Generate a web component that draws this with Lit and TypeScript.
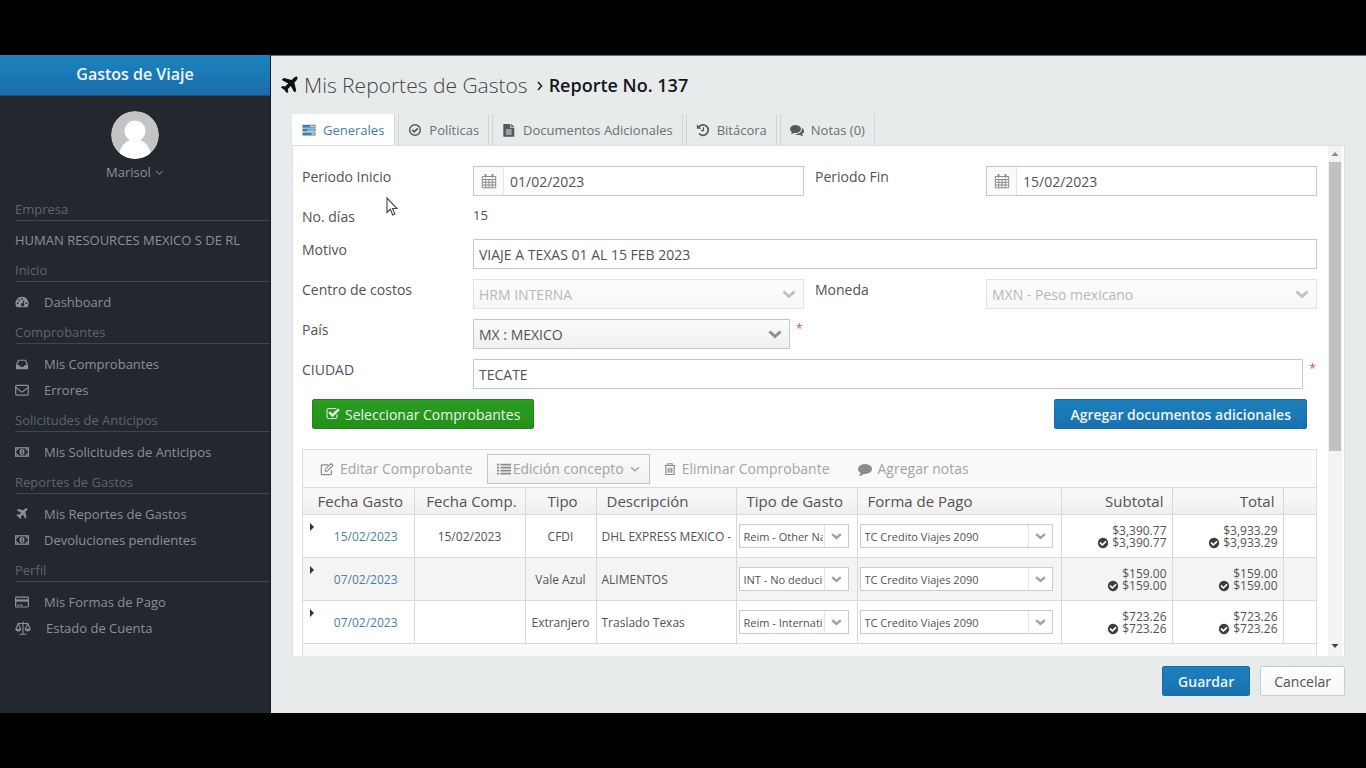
import { LitElement, html, css, svg, nothing } from "lit";
import { customElement, state } from "lit/decorators.js";

const fa = (d: string) => svg`<svg class="ico" viewBox="0 0 1792 1792" aria-hidden="true"><path fill="currentColor" d=${d}/></svg>`;

const plane = fa("M1568 160q44 52 12 148t-108 172l-161 161 160 696q5 19-12 33l-128 96q-7 6-19 6-4 0-7-1-15-3-21-16l-279-508-259 259 53 194q5 17-8 31l-96 96q-9 9-23 9h-2q-15-2-24-13l-189-252-252-189q-11-7-13-23-1-13 9-25l96-97q9-9 23-9 6 0 8 1l194 53 259-259-508-279q-14-8-17-24-2-16 9-27l128-128q14-13 30-8l665 159 160-160q76-76 172-108t148 12z");
const checkSquare = fa("M1472 930v318q0 119-84.5 203.5t-203.5 84.5h-832q-119 0-203.5-84.5t-84.5-203.5v-832q0-119 84.5-203.5t203.5-84.5h832q63 0 117 25 15 7 18 23 3 17-9 29l-49 49q-10 10-23 10-3 0-9-2-23-6-45-6h-832q-66 0-113 47t-47 113v832q0 66 47 113t113 47h832q66 0 113-47t47-113v-254q0-13 9-22l64-64q10-10 23-10 6 0 12 3 20 8 20 29zm231-489l-814 814q-24 24-57 24t-57-24l-430-430q-24-24-24-57t24-57l110-110q24-24 57-24t57 24l263 263 647-647q24-24 57-24t57 24l110 110q24 24 24 57t-24 57z");
const checkCircle = fa("M1412 734q0-28-18-46l-91-90q-19-19-45-19t-45 19l-408 407-226-226q-19-19-45-19t-45 19l-91 90q-18 18-18 46 0 27 18 45l362 362q19 19 45 19 27 0 46-19l543-543q18-18 18-45zm252 162q0 209-103 385.5t-279.5 279.5-385.5 103-385.5-103-279.5-279.5-103-385.5 103-385.5 279.5-279.5 385.5-103 385.5 103 279.5 279.5 103 385.5z");
const comment = fa("M1792 896q0 174-120 321.5t-326 233-450 85.500q-70 0-145-8-198 175-460 242-49 14-114 22-17 2-30.500-9t-17.500-29v-1q-3-4-.5-12t2-10 4.500-9.500l6-9 7-8.500 8-9q7-8 31-34.500t34.500-38 31-39.500 32.500-51 27-59 26-76q-157-89-247.500-220t-90.500-281q0-174 120-321.500t326-233 450-85.500 450 85.500 326 233 120 321.500z");
const comments = fa("M1408 768q0 139-94 257t-256.500 186.500-353.500 68.500q-86 0-176-16-124 88-278 128-36 9-86 16h-3q-11 0-20.500-8t-11.500-21q-1-3-1-6.500t.5-6.500 2-6l2.500-5 3.500-5.500 4-5 4.500-5 4-4.500q5-6 23-25t26-29.500 22.500-29 25-38.500 20.500-44q-124-72-195-177t-71-224q0-139 94-257t256.500-186.500 353.500-68.500 353.500 68.500 256.500 186.500 94 257zm384 256q0 120-71 224.500t-195 176.500q10 24 20.500 44t25 38.500 22.500 29 26 29.500 23 25q1 1 4 4.500t4.500 5 4 5 3.500 5.500l2.500 5 2 6 .5 6.500-1 6.500q-3 14-13 22t-22 7q-50-7-86-16-154-40-278-128-90 16-176 16-271 0-472-132 58 4 88 4 161 0 309-45t264-129q125-92 192-212t67-254q0-77-23-152 129 71 204 178t75 230z");

const box = (body: unknown) => svg`<svg class="ico" viewBox="0 0 16 16" fill="none" stroke="currentColor" stroke-width="1.4" aria-hidden="true">${body}</svg>`;

const gauge = box(svg`<path fill="currentColor" stroke="none" fill-rule="evenodd" d="M8 2a7.5 7.5 0 0 0-6.3 11.6q.3.4.7.4h11.2q.4 0 .7-.4A7.5 7.5 0 0 0 8 2zM2.2 9.300a1 1 0 1 0 2 0 1 1 0 1 0-2 0zM3.800 5.800a1 1 0 1 0 2 0 1 1 0 1 0-2 0zM7 4.300a1 1 0 1 0 2 0 1 1 0 1 0-2 0zM11.800 9.300a1 1 0 1 0 2 0 1 1 0 1 0-2 0zM9.800 5.600l.9.3-.9 3.600a1.900 1.900 0 1 1-1-.3z"/>`);
const inbox = box(svg`<path d="M1.700 9.500 4 3.700h8l2.300 5.800v3.800H1.700z" stroke-linejoin="round"/><path fill="currentColor" stroke="none" d="M1.500 9h3.400l1 2h4.200l1-2h3.400v4.600h-13z"/>`);
const envelope = box(svg`<rect x=".8" y="2.8" width="14.4" height="11" rx="1"/><path d="m1 5 5.800 4.600q1.200.9 2.400 0L15 5"/>`);
const money = box(svg`<rect x=".7" y="3.200" width="14.600" height="9.600"/><path d="M1 6q2.300-.3 2.500-2.500M15 6q-2.300-.3-2.500-2.500M1 10q2.300.3 2.500 2.500M15 10q-2.300.3-2.500 2.500"/><ellipse cx="8" cy="8" rx="2.800" ry="3.400" fill="currentColor" stroke="none"/><path stroke="#23272e" stroke-width=".9" d="M7.200 6.700 8.200 6.200v3.300M7 9.600h2.300"/>`);
const card = box(svg`<rect x=".7" y="2.300" width="14.600" height="11.400" rx="1"/><path stroke-width="2.600" d="M1 6.300h14"/><path d="M2.500 11.500h2M5.500 11.500h3"/>`);
const scale = svg`<svg class="ico broad" viewBox="0 0 16 16" fill="none" stroke="currentColor" aria-hidden="true"><path stroke-width="1.100" d="M8 1.500v12.500M4.500 14.300h7M2.500 3.500h11M3.200 3.500.8 9.300h5L3.200 3.500zM12.800 3.500l-2.600 5.800h5z"/><path fill="currentColor" stroke="none" d="M.4 9.300h5.800q-.4 2.200-2.900 2.200T.4 9.300zM9.800 9.300h5.800q-.4 2.200-2.900 2.200T9.800 9.300z"/></svg>`;
const tasks = box(svg`<path fill="currentColor" stroke="none" fill-rule="evenodd" d="M.5 2h15v3.400H.5zM9 3.200v1h5.500v-1zM.5 6.400h15v3.400H.5zM6 7.600v1h8.500v-1zM.5 10.800h15v3.400H.5zM11 12v1h3.500v-1z"/>`);
const checkCircleO = box(svg`<circle cx="8" cy="8" r="6.100" stroke-width="1.700"/><path stroke-width="2" d="m5 7.800 2.200 2.200 3.900-3.900"/>`);
const fileText = box(svg`<path fill="currentColor" stroke="none" fill-rule="evenodd" d="M1.500 1h8v4.500H14V15q0 .8-.8.8H2.300q-.8 0-.8-.8zM4.500 7.500v1H11v-1zM4.500 9.800v1H11v-1zM4.500 12.100v1H11v-1z"/><path fill="currentColor" stroke="none" d="M10.500.8 14 4.500h-3.500z"/>`);
const history = box(svg`<path stroke-width="2" d="M3.300 4.300A6 6 0 1 1 3.400 12"/><path fill="currentColor" stroke="none" d="M1 1.500v5.200h5.200z"/><path stroke-width="1.400" d="M8.500 4.800v4H5.800"/>`);
const calendar = box(svg`<path stroke-width="1" d="M1.300 3.500h13.400v11.300H1.300zM1.300 6.500h13.400M1.300 9.300h13.400M1.300 12h13.400M4.700 6.500v8.300M8 6.500v8.300M11.300 6.500v8.300"/><path stroke-width="1.800" d="M4.500 1v3.500M11.500 1v3.500"/>`);
const edit = box(svg`<path d="M13 9.500v3.800q0 1-1 1H2.500q-1 0-1-1V4.200q0-1 1-1h7"/><path stroke-width="1.200" d="M6 8.300 12.600 1.700l2.200 2.200-6.600 6.600H6z"/>`);
const list = box(svg`<path stroke-width="2" d="M0 3h2.500M4 3h12M0 6.400h2.500M4 6.400h12M0 9.800h2.500M4 9.800h12M0 13.200h2.500M4 13.200h12"/>`);
const trash = svg`<svg class="ico thin" viewBox="2 0 12 16" fill="none" stroke="currentColor" aria-hidden="true"><path d="M2 4h12M5.500 4V2h5v2M3.300 4v10.300h9.400V4M6 6.500v5.800M8 6.500v5.800M10 6.500v5.800" stroke-width="1.300"/></svg>`;
const chevron = svg`<svg class="chev" viewBox="0 0 14 14" fill="none" stroke="currentColor" aria-hidden="true"><path d="m1.500 4.500 5.500 5 5.500-5"/></svg>`;

const menu = [
  { title: "Inicio", items: [{ icon: gauge, text: "Dashboard" }] },
  { title: "Comprobantes", items: [{ icon: inbox, text: "Mis Comprobantes" }, { icon: envelope, text: "Errores" }] },
  { title: "Solicitudes de Anticipos", items: [{ icon: money, text: "Mis Solicitudes de Anticipos" }] },
  { title: "Reportes de Gastos", items: [{ icon: plane, text: "Mis Reportes de Gastos" }, { icon: money, text: "Devoluciones pendientes" }] },
  { title: "Perfil", items: [{ icon: card, text: "Mis Formas de Pago" }, { icon: scale, text: "Estado de Cuenta" }] },
];

const tabs = [
  { icon: tasks, text: "Generales" },
  { icon: checkCircleO, text: "Políticas" },
  { icon: fileText, text: "Documentos Adicionales" },
  { icon: history, text: "Bitácora" },
  { icon: comments, text: "Notas (0)" },
];

const rows = [
  { date: "15/02/2023", comp: "15/02/2023", type: "CFDI", desc: "DHL EXPRESS MEXICO -", kind: "Reim - Other National", pay: "TC Credito Viajes 2090", sub: "$3,390.77", total: "$3,933.29" },
  { date: "07/02/2023", comp: "", type: "Vale Azul", desc: "ALIMENTOS", kind: "INT - No deducible", pay: "TC Credito Viajes 2090", sub: "$159.00", total: "$159.00" },
  { date: "07/02/2023", comp: "", type: "Extranjero", desc: "Traslado Texas", kind: "Reim - International", pay: "TC Credito Viajes 2090", sub: "$723.26", total: "$723.26" },
];

const shared = css`
  :host, *, *::before, *::after { box-sizing: border-box; }
  button, input, select { font: inherit; color: inherit; margin: 0; border-radius: 0; }
  button { cursor: pointer; }
  .ico { width: 14px; height: 14px; flex: none; display: block; }
  .chev { width: 14px; height: 14px; flex: none; display: block; stroke-width: 2; }
`;

@customElement("side-menu")
class SideMenu extends LitElement {
  static styles = [shared, css`
    :host { display: flex; flex-direction: column; width: 271px; flex: none; background: #23272e; color: #8b9096; border-right: 1px solid #14171b; overflow: hidden; font-size: 13px; }
    .brand { height: 41px; flex: none; display: flex; align-items: center; justify-content: center; padding-bottom: 2px; font-size: 16px; font-weight: 600; color: #f1f8fc; background: linear-gradient(#1b85bd, #1a6cab); border-bottom: 1px solid #1c4f78; }
    .user { display: flex; flex-direction: column; align-items: center; padding: 15px 0; gap: 3px; }
    .avatar { width: 48px; height: 48px; border-radius: 50%; display: block; }
    .who { display: flex; align-items: center; gap: 4px; height: 20px; border: 0; padding: 0; background: none; }
    .who .chev { width: 9px; height: 9px; opacity: .7; }
    section { padding-bottom: 5px; }
    h2 { margin: 0 0 7px 15px; height: 24px; line-height: 24px; font-size: 13px; font-weight: 400; color: #5f656d; border-bottom: 1px solid #41464d; }
    .company { margin: 0 0 0 15px; line-height: 25px; white-space: nowrap; }
    ul { margin: 0; padding: 0; list-style: none; }
    a { display: flex; align-items: center; gap: 15px; height: 26px; padding-left: 15px; color: inherit; text-decoration: none; white-space: nowrap; }
    .broad { width: 16px; height: 16px; }
  `];

  render() {
    return html`
      <div class="brand">Gastos de Viaje</div>
      <div class="user">
        <svg class="avatar" viewBox="0 0 48 48" aria-hidden="true"><clipPath id="round"><circle cx="24" cy="24" r="24"/></clipPath><g clip-path="url(#round)"><path fill="#c4c4c4" d="M0 0h48v48H0z"/><circle cx="24" cy="20" r="10.500" fill="#fff"/><path fill="#fff" d="M8 44q2-12 11-15 5 3 10 0 9 3 11 15-7 6-16 6T8 44z"/></g></svg>
        <button class="who">Marisol ${chevron}</button>
      </div>
      <section><h2>Empresa</h2><p class="company">HUMAN RESOURCES MEXICO S DE RL</p></section>
      <nav>
        ${menu.map(s => html`<section><h2>${s.title}</h2><ul>${s.items.map(i => html`<li><a href="#">${i.icon}<span>${i.text}</span></a></li>`)}</ul></section>`)}
      </nav>`;
  }
}

@customElement("expense-table")
class ExpenseTable extends LitElement {
  static styles = [shared, css`
    :host { display: block; border: 1px solid #dcdedf; background: #fafafa; color: #525354; }
    .tools { display: flex; align-items: center; height: 37px; padding-left: 3px; color: #a3a3a3; font-size: 14px; }
    .tools button { display: flex; align-items: center; gap: 6px; height: 30px; padding: 0 13px; border: 1px solid transparent; background: none; white-space: nowrap; }
    .tools .drop { gap: 2px; padding: 0 9px; border-color: #c3c5c6; background: linear-gradient(#fafafa, #f1f1f1); }
    .tools .drop .chev { width: 10px; height: 10px; margin-left: 4px; }
    .tools .ico { color: #8b8b8b; }
    .tools .thin { width: 12px; }
    table { width: 100%; table-layout: fixed; border-collapse: collapse; }
    th, td { padding: 0 5px; border-right: 1px solid #d6d8d9; border-bottom: 1px solid #d9dbdc; font-weight: 400; text-align: left; white-space: nowrap; overflow: hidden; }
    th:last-child, td:last-child { border-right: 0; }
    th { height: 27px; padding: 0 10px; font-size: 15px; border-top: 1px solid #d9dbdc; background: linear-gradient(#fafafa, #efefef); }
    td { height: 43px; font-size: 12px; background: #fff; }
    tr:nth-child(even) td { background: #f4f4f4; }
    .mid { text-align: center; padding: 0 3px; }
    th.mid { padding: 0 1px 0 5px; }
    .num { text-align: right; }
    th.num { padding-right: 8px; }
    .c-date { width: 111px; } .c-comp { width: 111px; } .c-type { width: 71px; } .c-desc { width: 140px; }
    .c-kind { width: 121px; } .c-num { width: 111px; } .c-end { width: 33px; }
    .date { display: flex; justify-content: space-between; align-items: flex-start; padding: 0 11px 0 1px; }
    .open { width: 8px; height: 8px; padding: 0; border: 0; background: none; }
    .open svg { display: block; width: 6px; height: 8px; }
    .date a { color: #4b7f9f; text-decoration: none; padding: 5px 0; }
    .pick { display: grid; }
    .pick > * { grid-area: 1 / 1; }
    td.combo { padding: 0 8px 0 2px; }
    .pick select { appearance: none; width: 100%; height: 24px; padding: 0 25px 0 4px; border: 1px solid #c9cbcc; background: #fff; font-size: 11px; text-overflow: clip; }
    .pick .chev { width: 24px; height: 22px; padding: 4px 6px; margin-right: 1px; justify-self: end; align-self: center; border-left: 1px solid #e4e6e7; color: #a0a0a0; stroke-width: 3; pointer-events: none; }
    .sum { display: flex; flex-direction: column; align-items: flex-end; padding-top: 2px; line-height: 12px; }
    .sum span { display: flex; align-items: center; gap: 3px; }
    .sum .ico { width: 12px; height: 12px; color: #3c3c3c; }
    .rest { height: 60px; }
  `];

  private amount(v: string) {
    return html`<div class="sum"><span>${v}</span><span>${checkCircle}${v}</span></div>`;
  }

  private combo(label: string, v: string) {
    return html`<div class="pick"><select aria-label=${label}><option>${v}</option></select>${chevron}</div>`;
  }

  render() {
    return html`
      <div class="tools">
        <button>${edit}Editar Comprobante</button>
        <button class="drop">${list}Edición concepto${chevron}</button>
        <button>${trash}Eliminar Comprobante</button>
        <button>${comment}Agregar notas</button>
      </div>
      <table>
        <colgroup><col class="c-date"><col class="c-comp"><col class="c-type"><col class="c-desc"><col class="c-kind"><col><col class="c-num"><col class="c-num"><col class="c-end"></colgroup>
        <thead><tr><th class="mid">Fecha Gasto</th><th class="mid">Fecha Comp.</th><th class="mid">Tipo</th><th>Descripción</th><th>Tipo de Gasto</th><th>Forma de Pago</th><th class="num">Subtotal</th><th class="num">Total</th><th></th></tr></thead>
        <tbody>
          ${rows.map(r => html`<tr>
            <td><div class="date"><button class="open" aria-label="Expandir"><svg viewBox="0 0 6 8"><path fill="#333" d="M1 0l4 4-4 4z"/></svg></button><a href="#">${r.date}</a></div></td>
            <td class="mid">${r.comp}</td>
            <td class="mid">${r.type}</td>
            <td>${r.desc}</td>
            <td class="combo">${this.combo("Tipo de Gasto", r.kind)}</td>
            <td class="combo">${this.combo("Forma de Pago", r.pay)}</td>
            <td class="num">${this.amount(r.sub)}</td>
            <td class="num">${this.amount(r.total)}</td>
            <td></td>
          </tr>`)}
        </tbody>
      </table>
      <div class="rest"></div>`;
  }
}

@customElement("app-root")
class AppRoot extends LitElement {
  @state() private tab = 0;

  static styles = [shared, css`
    :host { display: flex; position: relative; height: 100vh; padding: 55px 0; background: #000; color: #525354; font-family: "Open Sans", "Noto Sans", sans-serif; font-size: 14px; }
    main { flex: 1; min-width: 0; display: flex; flex-direction: column; background: #e7ebec; border-top: 1px solid #3d7db3; }
    h1 { display: flex; align-items: center; height: 58px; flex: none; margin: 0; padding-left: 8px; font-size: 21px; font-weight: 300; color: #444; white-space: nowrap; }
    h1 .ico { width: 21px; height: 21px; color: #111; margin-right: 4px; }
    h1 .sep { width: 8px; height: 10px; margin: 2px 5px 0 8px; }
    h1 b { font-size: 18px; font-weight: 600; color: #161616; }
    .tabs { display: flex; gap: 3px; padding-left: 21px; flex: none; }
    .tabs button { display: flex; align-items: center; gap: 7px; height: 31px; padding: 0 9px; border: 1px solid #d2d6d7; border-width: 0 1px; background: none; color: #6b6f72; font-size: 13px; white-space: nowrap; }
    .tabs button.on { padding-right: 10px; background: #fff; color: #3e7ea8; border-left-color: #fff; }
    .tabs button:not(.on) .ico { color: #55595c; }
    .panel { flex: 1; min-height: 0; display: flex; margin: 0 21px; background: #fff; border: 1px solid #dde0e1; border-bottom: 0; }
    .body { flex: 1; min-width: 0; overflow: hidden; padding: 20px 11px 0 9px; }
    .bar { width: 14px; flex: none; display: flex; flex-direction: column; align-items: center; background: #f3f3f3; margin-right: 2px; }
    .bar i { width: 12px; height: 289px; background: #c1c1c1; }
    .bar svg { width: 14px; height: 16px; flex: none; display: block; }
    .bar svg:last-child { margin-top: auto; }
    .form { display: grid; grid-template-columns: 160px minmax(0, 1fr) 160px minmax(0, 1fr); gap: 10px 11px; }
    .form label, .cap { line-height: 22px; align-self: start; }
    .form .lead { grid-column: 1; }
    .days { display: block; height: 23px; line-height: 19px; font-size: 13px; }
    .wide { grid-column: 2 / -1; }
    .text, .datebox { width: 100%; height: 30px; border: 1px solid #c5c7c8; background: #fff; }
    .text { padding: 0 5px; }
    .datebox { display: flex; }
    .datebox button { width: 30px; padding: 0 0 0 1px; border: 0; border-right: 1px solid #e4e6e7; background: #fafafa; color: #8b8b8b; display: flex; align-items: center; justify-content: center; }
    .datebox button .ico { width: 16px; height: 16px; }
    .datebox input { flex: 1; min-width: 0; border: 0; padding: 0 6px; background: none; }
    .sel { display: grid; flex: 1; min-width: 0; }
    .sel > * { grid-area: 1 / 1; }
    .sel select { appearance: none; width: 100%; height: 30px; padding: 0 30px 0 5px; border: 1px solid #c5c7c8; background: linear-gradient(#fafafa, #f0f0f0); opacity: 1; }
    .sel select:disabled { color: #b8b8b8; border-color: #e2e3e4; background: linear-gradient(#fdfdfd, #f7f7f7); }
    .sel .chev { justify-self: end; align-self: center; margin-right: 8px; color: #8f8f8f; stroke-width: 3; pointer-events: none; }
    .sel select:disabled + .chev { color: #c2c2c2; }
    .req { display: flex; gap: 6px; }
    .req span { width: 8px; color: #c8525f; font-size: 12px; line-height: 20px; }
    .actions { display: flex; justify-content: space-between; padding: 10px 10px 20px; }
    .btn { display: flex; align-items: center; gap: 5px; height: 30px; padding: 0 13px; border: 1px solid #c9cccd; border-radius: 2px; background: linear-gradient(#fff, #f6f6f6); white-space: nowrap; }
    .btn.blue { padding: 0 15px; color: #eaf5fc; font-weight: 600; border-color: #1b6ca6; background: linear-gradient(#1b80bd, #1a71af); }
    .btn.green { color: #e9f8e7; border-color: #24831d; background: linear-gradient(#2a9d22, #249019); }
    .foot { flex: none; display: flex; justify-content: flex-end; gap: 10px; padding: 10px 21px 17px; }
    .pointer { position: absolute; left: 386px; top: 197px; width: 12px; height: 20px; pointer-events: none; }
  `];

  private disabledSelect(id: string, v: string) {
    return html`<div class="sel"><select id=${id} disabled><option>${v}</option></select>${chevron}</div>`;
  }

  private dateField(id: string, v: string) {
    return html`<div class="datebox"><button aria-label="Abrir calendario">${calendar}</button><input id=${id} .value=${v}></div>`;
  }

  render() {
    return html`
      <side-menu></side-menu>
      <main>
        <h1>${plane}Mis Reportes de Gastos<svg class="sep" viewBox="0 0 8 10" fill="none" stroke="#222" stroke-width="1.600" aria-hidden="true"><path d="m2 1 3.500 4L2 9"/></svg><b>Reporte No. 137</b></h1>
        <div class="tabs" role="tablist">
          ${tabs.map((t, i) => html`<button role="tab" aria-selected=${this.tab === i} class=${this.tab === i ? "on" : nothing} @click=${() => (this.tab = i)}>${t.icon}${t.text}</button>`)}
        </div>
        <div class="panel">
          <div class="body">
            <div class="form">
              <label for="start">Periodo Inicio</label>${this.dateField("start", "01/02/2023")}
              <label for="end">Periodo Fin</label>${this.dateField("end", "15/02/2023")}
              <span class="cap">No. días</span><span class="days wide">15</span>
              <label for="reason">Motivo</label><input id="reason" class="text wide" .value=${"VIAJE A TEXAS 01 AL 15 FEB 2023"}>
              <label for="center">Centro de costos</label>${this.disabledSelect("center", "HRM INTERNA")}
              <label for="money">Moneda</label>${this.disabledSelect("money", "MXN - Peso mexicano")}
              <label for="country">País</label>
              <div class="req"><div class="sel"><select id="country"><option>MX : MEXICO</option></select>${chevron}</div><span>*</span></div>
              <label class="lead" for="city">CIUDAD</label>
              <div class="req wide"><input id="city" class="text" .value=${"TECATE"}><span>*</span></div>
            </div>
            <div class="actions">
              <button class="btn green">${checkSquare}Seleccionar Comprobantes</button>
              <button class="btn blue">Agregar documentos adicionales</button>
            </div>
            <expense-table></expense-table>
          </div>
          <div class="bar" aria-hidden="true">
            <svg viewBox="0 0 14 16"><path fill="#8a8a8a" d="M3.500 10 7 6l3.500 4z"/></svg><i></i>
            <svg viewBox="0 0 14 16"><path fill="#444" d="M3.500 4h7L7 8z"/></svg>
          </div>
        </div>
        <div class="foot"><button class="btn blue">Guardar</button><button class="btn">Cancelar</button></div>
      </main>
      <svg class="pointer" viewBox="0 0 12 20" aria-hidden="true"><path fill="#fff" stroke="#3f454b" stroke-width="1.100" d="M1 1v14.500l3.300-3.200 2.400 5.600 2.200-1-2.400-5.400H11z"/></svg>`;
  }
}
